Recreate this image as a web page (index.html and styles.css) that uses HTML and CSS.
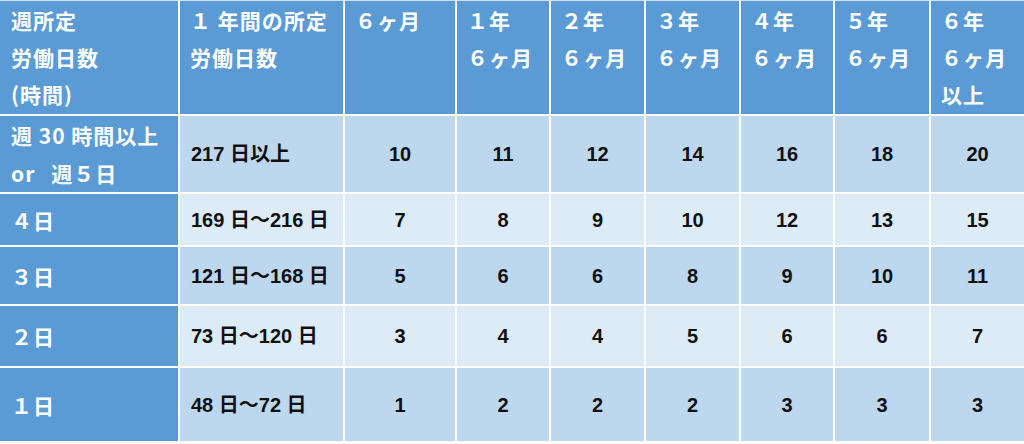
FILE: index.html
```html
<!DOCTYPE html>
<html lang="ja">
<head>
<meta charset="utf-8">
<title>年次有給休暇の比例付与日数</title>
<link rel="stylesheet" href="styles.css">
</head>
<body>
<table class="leave">
  <colgroup>
    <col class="c-week">
    <col class="c-year">
    <col class="c-6m">
    <col class="c-n">
    <col class="c-n2">
    <col class="c-n2">
    <col class="c-n">
    <col class="c-n3">
    <col class="c-n4">
  </colgroup>
  <thead>
    <tr class="head">
      <th>週所定<br>労働日数<br>(時間)</th>
      <th>１ 年間の所定<br>労働日数</th>
      <th>６ヶ月</th>
      <th>１年<br>６ヶ月</th>
      <th>２年<br>６ヶ月</th>
      <th>３年<br>６ヶ月</th>
      <th>４年<br>６ヶ月</th>
      <th>５年<br>６ヶ月</th>
      <th>６年<br>６ヶ月<br>以上</th>
    </tr>
  </thead>
  <tbody>
    <tr class="r1 band-dark">
      <th>週 30 時間以上<br><span class="or">or</span>週５日</th>
      <td class="range">217 日以上</td>
      <td>10</td><td>11</td><td>12</td><td>14</td><td>16</td><td>18</td><td>20</td>
    </tr>
    <tr class="r2 band-light">
      <th>４日</th>
      <td class="range">169 日～216 日</td>
      <td>7</td><td>8</td><td>9</td><td>10</td><td>12</td><td>13</td><td>15</td>
    </tr>
    <tr class="r3 band-dark">
      <th>３日</th>
      <td class="range">121 日～168 日</td>
      <td>5</td><td>6</td><td>6</td><td>8</td><td>9</td><td>10</td><td>11</td>
    </tr>
    <tr class="r4 band-light">
      <th>２日</th>
      <td class="range">73 日～120 日</td>
      <td>3</td><td>4</td><td>4</td><td>5</td><td>6</td><td>6</td><td>7</td>
    </tr>
    <tr class="r5 band-dark">
      <th>１日</th>
      <td class="range">48 日～72 日</td>
      <td>1</td><td>2</td><td>2</td><td>2</td><td>3</td><td>3</td><td>3</td>
    </tr>
  </tbody>
</table>
</body>
</html>
```
FILE: styles.css
```css
html, body {
  margin: 0;
  padding: 0;
  background: #ffffff;
}

.leave {
  width: 1024px;
  table-layout: fixed;
  border-collapse: separate;
  border-spacing: 0;
  font-family: "Noto Sans CJK JP", sans-serif;
}

.c-week { width: 180px; }
.c-year { width: 165px; }
.c-6m { width: 112px; }
.c-n { width: 94px; }
.c-n2 { width: 95px; }
.c-n3 { width: 96px; }
.c-n4 { width: 93px; }

.leave th,
.leave td {
  border-right: 2px solid #ffffff;
  border-bottom: 2px solid #ffffff;
  padding: 0;
}

.leave th:last-child,
.leave td:last-child {
  border-right: none;
}

.leave .head th {
  background: #5b9bd5;
  color: #ffffff;
  font-weight: 700;
  font-size: 21px;
  line-height: 37px;
  letter-spacing: 1px;
  text-align: left;
  vertical-align: top;
  padding: 1px 0 0 10px;
  border-top: 1px solid #cfe0f1;
}

.leave .head th:first-child {
  padding-left: 11px;
}

.head { height: 116px; }
.r1 { height: 78px; }
.r2 { height: 53px; }
.r3 { height: 59px; }
.r4 { height: 62px; }
.r5 { height: 75px; }

.leave tbody th {
  background: #5b9bd5;
  color: #ffffff;
  font-weight: 700;
  font-size: 21px;
  line-height: 38px;
  letter-spacing: 1px;
  text-align: left;
  vertical-align: middle;
  padding-left: 11px;
}

.or {
  margin-right: 16px;
}

.leave tbody td {
  color: #111111;
  font-family: "Liberation Sans", "Noto Sans CJK JP", sans-serif;
  font-weight: 700;
  font-size: 20px;
  line-height: 24px;
  text-align: center;
  vertical-align: middle;
}

.leave tbody td.range {
  text-align: left;
  padding-left: 11px;
}

.band-dark td { background: #bdd7ee; }
.band-light td { background: #ddebf7; }
```
